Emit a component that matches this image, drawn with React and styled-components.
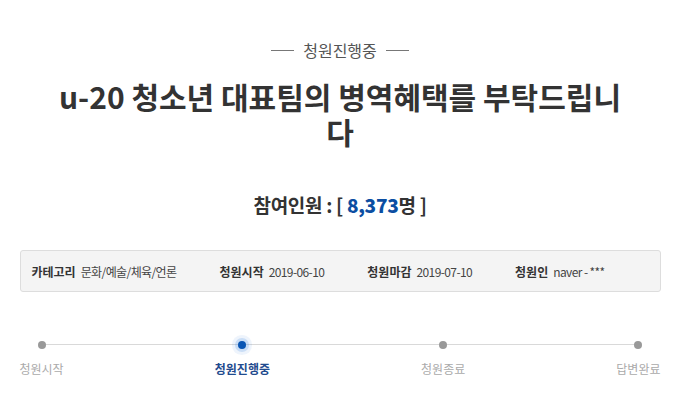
import React from 'react';
import styled, { createGlobalStyle } from 'styled-components';

const GlobalStyle = createGlobalStyle`
  body {
    margin: 0;
    background: #fff;
    font-family: "Noto Sans CJK KR", "Noto Sans", sans-serif;
    color: #333;
  }
`

const Page = styled.div`
  width: 640px;
  margin: 0 auto;
  padding-top: 40px;
  display: flex;
  flex-direction: column;
  align-items: center;
`

const Status = styled.div`
  display: flex;
  align-items: center;
  gap: 9px;
  font-size: 16px;
  line-height: 20px;
  color: #555;

  &::before, &::after {
    content: '';
    width: 23px;
    height: 1px;
    background: #777;
  }
`

const Title = styled.h1`
  width: 580px;
  margin: 19px 0 0;
  font-size: 30px;
  line-height: 35px;
  font-weight: 700;
  color: #333;
  text-align: center;
`

const Count = styled.div`
  margin-top: 44px;
  font-size: 19px;
  line-height: 24px;
  font-weight: 700;
  color: #333;
  letter-spacing: -0.3px;

  strong {
    color: #0b4ea2;
  }
`

const InfoBox = styled.ul`
  box-sizing: border-box;
  width: 641px;
  height: 42px;
  margin: 33px 0 0;
  padding: 0 0 0 11px;
  list-style: none;
  display: flex;
  align-items: center;
  gap: 43px;
  background: #f4f4f4;
  border: 1px solid #ddd;
  border-radius: 3px;
  font-size: 12px;
`

const InfoItem = styled.li`
  display: flex;
  align-items: center;
  gap: 5px;

  b {
    font-weight: 700;
    color: #333;
  }
  span {
    color: #444;
    letter-spacing: -0.6px;
  }
`

const Steps = styled.ol`
  position: relative;
  width: 641px;
  margin: 49px 0 0;
  padding: 0;
  list-style: none;
  display: flex;
  justify-content: space-between;

  &::before {
    content: '';
    position: absolute;
    top: 3px;
    left: 21px;
    right: 21px;
    height: 1px;
    background: #d9d9d9;
  }
`

const Step = styled.li`
  display: flex;
  flex-direction: column;
  align-items: center;
  gap: 12px;
  font-size: 12px;
  line-height: 16px;
  color: ${p => (p.$active ? '#1f4b8e' : '#aaa')};
  font-weight: ${p => (p.$active ? 700 : 400)};
`

const Dot = styled.span`
  position: relative;
  z-index: 1;
  width: 8px;
  height: 8px;
  border-radius: 50%;
  background: ${p => (p.$active ? '#0a56b4' : '#999')};
  box-shadow: ${p =>
    p.$active ? '0 0 0 3px rgba(40,120,220,0.18), 0 0 0 6px rgba(40,120,220,0.08)' : 'none'};
`

const steps = ['청원시작', '청원진행중', '청원종료', '답변완료']

export default function App() {
  return (
    <>
      <GlobalStyle />
      <Page>
        <Status>청원진행중</Status>
        <Title>u-20 청소년 대표팀의 병역혜택를 부탁드립니다</Title>
        <Count>
          참여인원 : [ <strong>8,373</strong>명 ]
        </Count>
        <InfoBox>
          <InfoItem><b>카테고리</b><span>문화/예술/체육/언론</span></InfoItem>
          <InfoItem><b>청원시작</b><span>2019-06-10</span></InfoItem>
          <InfoItem><b>청원마감</b><span>2019-07-10</span></InfoItem>
          <InfoItem><b>청원인</b><span>naver - ***</span></InfoItem>
        </InfoBox>
        <Steps>
          {steps.map((s, i) => (
            <Step key={s} $active={i === 1}>
              <Dot $active={i === 1} />
              {s}
            </Step>
          ))}
        </Steps>
      </Page>
    </>
  )
}
